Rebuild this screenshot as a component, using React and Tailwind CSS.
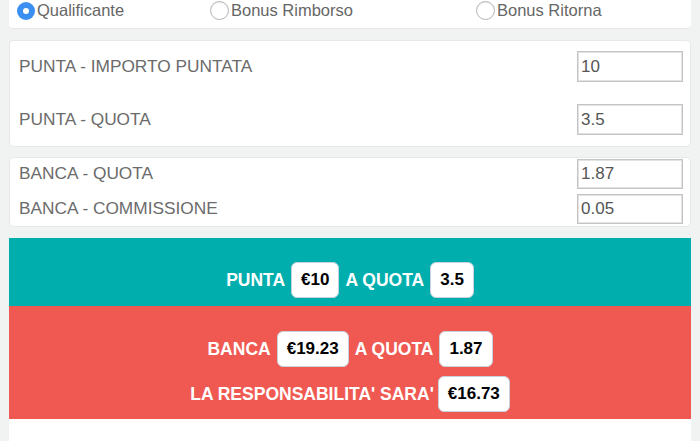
const Radio = ({ checked, label, className }) => (
  <label className={`flex items-center h-[19px] ${className}`}>
    {checked ? (
      <span className="w-[18px] h-[18px] rounded-full bg-[#3b8ff0] flex items-center justify-center">
        <span className="w-[6px] h-[6px] rounded-full bg-white" />
      </span>
    ) : (
      <span className="w-[19px] h-[19px] rounded-full bg-white border border-[#b5b5b5] shadow-[inset_0_1px_1px_rgba(0,0,0,0.08)]" />
    )}
    <span className="ml-[2px] text-[16.5px] leading-[19px] text-[#666]">{label}</span>
  </label>
);

const Field = ({ label, value, className }) => (
  <div className={`flex items-center justify-between ${className}`}>
    <span className="text-[17.3px] leading-none text-[#6b6b6b]">{label}</span>
    <input
      readOnly
      value={value}
      className="w-[106px] h-full border border-[#c4c4c4] shadow-[inset_0_0_0_1px_#e2e2e2] bg-white px-[3px] text-[17px] text-[#555] outline-none"
    />
  </div>
);

const Box = ({ children }) => (
  <span className="h-[36px] px-[9px] flex items-center bg-white rounded-[6px] border border-[#c7d2da] text-black text-[17px] font-bold">
    {children}
  </span>
);

export default function App() {
  return (
    <div className="w-[700px] h-[441px] overflow-hidden bg-[#f1f2f2] px-[9px] font-['Liberation_Sans',Arial,sans-serif]">
      {/* bet type */}
      <div className="h-[29px] bg-white rounded-b-[4px] border-b border-[#e6e6e6] pt-[1px] pl-[8px] flex items-start">
        <Radio checked label="Qualificante" className="w-[193px]" />
        <Radio label="Bonus Rimborso" className="w-[266px]" />
        <Radio label="Bonus Ritorna" />
      </div>

      {/* punta */}
      <div className="mt-[11px] bg-white rounded-[4px] border border-[#e8e8e8] pl-[9px] pr-[7px] pt-[10px] pb-[11px] flex flex-col gap-[22px]">
        <Field label="PUNTA - IMPORTO PUNTATA" value="10" className="h-[31px]" />
        <Field label="PUNTA - QUOTA" value="3.5" className="h-[31px]" />
      </div>

      {/* banca */}
      <div className="mt-[10px] bg-white rounded-[4px] border border-[#e8e8e8] pl-[9px] pr-[7px] pt-[1px] pb-[2px] flex flex-col gap-[5px]">
        <Field label="BANCA - QUOTA" value="1.87" className="h-[30px]" />
        <Field label="BANCA - COMMISSIONE" value="0.05" className="h-[30px]" />
      </div>

      {/* results */}
      <div className="mt-[11px] bg-white h-[300px]">
        <div className="bg-[#00aeae] pt-[24px] pb-[8px] flex justify-center items-center gap-[6px] text-white font-bold text-[17.5px]">
          <span>PUNTA</span>
          <Box>€10</Box>
          <span>A QUOTA</span>
          <Box>3.5</Box>
        </div>
        <div className="bg-[#f05951] pt-[25px] pb-[7px] flex flex-col items-center gap-[9px] text-white font-bold text-[17.5px]">
          <div className="flex items-center gap-[6px]">
            <span>BANCA</span>
            <Box>€19.23</Box>
            <span>A QUOTA</span>
            <Box>1.87</Box>
          </div>
          <div className="flex items-center gap-[4px]">
            <span>LA RESPONSABILITA' SARA'</span>
            <Box>€16.73</Box>
          </div>
        </div>
      </div>
    </div>
  );
}
